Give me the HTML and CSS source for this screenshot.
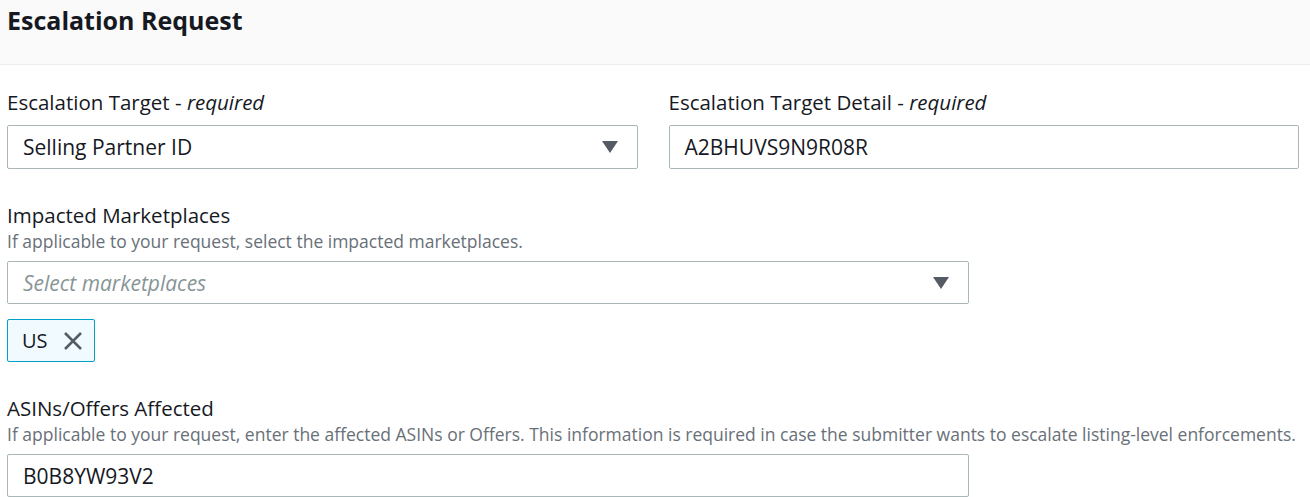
FILE: index.html
```html
<!DOCTYPE html>
<html lang="en">
<head>
  <meta charset="UTF-8" />
  <title>Escalation Request</title>
  <link rel="stylesheet" href="styles.css">
</head>
<body>
  <div class="panel-header">
    <h2>Escalation Request</h2>
  </div>

  <div class="panel-body">
    <div class="row">
      <div class="field">
        <label class="field-label">Escalation Target - <i>required</i></label>
        <div class="select-box">
          <span>Selling Partner ID</span>
          <span class="caret"></span>
        </div>
      </div>
      <div class="field">
        <label class="field-label">Escalation Target Detail - <i>required</i></label>
        <div class="input-box">A2BHUVS9N9R08R</div>
      </div>
    </div>

    <div class="field section">
      <label class="field-label">Impacted Marketplaces</label>
      <div class="field-desc">If applicable to your request, select the impacted marketplaces.</div>
      <div class="select-box wide">
        <span class="placeholder">Select marketplaces</span>
        <span class="caret"></span>
      </div>
      <div class="tokens">
        <span class="token">US
          <svg width="20" height="20" viewBox="0 0 20 20"><path d="M2 2 L18 18 M18 2 L2 18" stroke="#545b64" stroke-width="2.5" fill="none"/></svg>
        </span>
      </div>
    </div>

    <div class="field section">
      <label class="field-label">ASINs/Offers Affected</label>
      <div class="field-desc">If applicable to your request, enter the affected ASINs or Offers. This information is required in case the submitter wants to escalate listing-level enforcements.</div>
      <div class="input-box wide">B0B8YW93V2</div>
    </div>
  </div>
</body>
</html>
```

FILE: styles.css
```css
body {
  margin: 0;
  font-family: "Open Sans", Arial, sans-serif;
  color: #16191f;
  background: #fff;
}

.panel-header {
  background: #fafafa;
  border-bottom: 1px solid #eaeded;
  height: 65px;
  padding: 0 7px;
  box-sizing: border-box;
}

.panel-header h2 {
  margin: 0;
  padding-top: 4px;
  font-size: 25px;
  line-height: 32px;
  font-weight: bold;
}

.panel-body {
  padding: 25px 11px 0 7px;
}

.row {
  display: grid;
  grid-template-columns: 1fr 1fr;
  gap: 31px;
}

.section {
  margin-top: 34px;
}

.field-label {
  display: block;
  font-size: 20.5px;
  line-height: 24px;
  margin-bottom: 11px;
}

.section .field-label {
  margin-bottom: 3px;
}

.field-desc {
  font-size: 17.5px;
  line-height: 22px;
  color: #687078;
  margin-bottom: 9px;
}

.select-box,
.input-box {
  display: flex;
  align-items: center;
  justify-content: space-between;
  height: 44px;
  box-sizing: border-box;
  border: 1px solid #aab7b8;
  border-radius: 2px;
  padding: 0 19px 0 15px;
  font-size: 21px;
  background: #fff;
}

.section .select-box,
.section .input-box {
  height: 43px;
}

.wide {
  width: 962px;
}

.placeholder {
  color: #879596;
  font-style: italic;
}

.caret {
  width: 0;
  height: 0;
  border-left: 8px solid transparent;
  border-right: 8px solid transparent;
  border-top: 12px solid #545b64;
}

.tokens {
  margin-top: 15px;
}

.token {
  display: inline-flex;
  align-items: center;
  gap: 15px;
  height: 43px;
  box-sizing: border-box;
  padding: 0 11px 0 14px;
  border: 1px solid #00a1c9;
  border-radius: 2px;
  background: #f1faff;
  font-size: 20px;
}
```
